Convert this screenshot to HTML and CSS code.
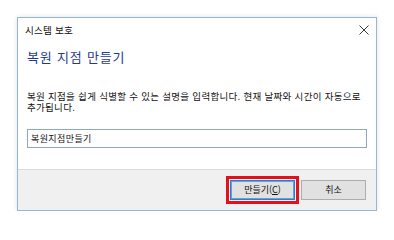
FILE: index.html
```html
<!DOCTYPE html>
<html lang="ko">
<head>
<meta charset="utf-8">
<title>시스템 보호</title>
<link rel="stylesheet" href="styles.css">
</head>
<body>
<div class="dialog">
  <div class="titlebar">
    <span class="title">시스템 보호</span>
    <span class="close" aria-label="닫기">
      <svg width="10" height="10" viewBox="0 0 10 10"><path d="M0.5 0.5L9.5 9.5M9.5 0.5L0.5 9.5" stroke="#3a3a3a" stroke-width="1" fill="none"/></svg>
    </span>
  </div>
  <div class="content">
    <h1 class="heading">복원 지점 만들기</h1>
    <p class="desc">복원 지점을 쉽게 식별할 수 있는 설명을 입력합니다. 현재 날짜와 시간이 자동으로 추가됩니다.</p>
    <div class="field">복원지점만들기</div>
  </div>
  <div class="footer">
    <span class="highlight"><button class="btn btn-default">만들기(<u>C</u>)</button></span>
    <button class="btn">취소</button>
  </div>
</div>
</body>
</html>
```
FILE: styles.css
```css
html, body {
  margin: 0;
  padding: 0;
  background: #ffffff;
}
body {
  padding: 17px 0 0 17px;
  font-family: "Noto Sans CJK KR", "Noto Sans", sans-serif;
  color: #000;
}
.dialog {
  width: 360px;
  height: 194px;
  box-sizing: border-box;
  border: 1px solid #95b7d6;
  background: #fff;
  display: flex;
  flex-direction: column;
  box-shadow: 0 0 5px rgba(0, 0, 0, 0.12);
}
.titlebar {
  height: 24px;
  display: flex;
  align-items: center;
  justify-content: space-between;
  padding: 0 7px 0 7px;
}
.title {
  font-size: 9.6px;
  line-height: 12px;
  letter-spacing: 0.2px;
  color: #111;
}
.close {
  display: flex;
  width: 10px;
  height: 10px;
}
.content {
  flex: 1;
  padding: 7px 9px 0 9px;
}
.heading {
  margin: 0;
  font-size: 13px;
  line-height: 16px;
  font-weight: normal;
  letter-spacing: 0.8px;
  color: #1f3a93;
}
.desc {
  margin: 26px 0 0 0;
  font-size: 9.5px;
  line-height: 10.5px;
  letter-spacing: 0.3px;
  word-break: keep-all;
  color: #111;
}
.field {
  margin-top: 17px;
  height: 19px;
  box-sizing: border-box;
  border: 1px solid #8ea7c4;
  padding: 0 3px;
  font-size: 9px;
  line-height: 17px;
  letter-spacing: 0.4px;
  color: #111;
}
.footer {
  height: 41px;
  box-sizing: border-box;
  border-top: 1px solid #dcdcdc;
  background: #f0f0f0;
  display: flex;
  align-items: center;
  justify-content: flex-end;
  gap: 2px;
  padding-right: 10px;
}
.highlight {
  display: flex;
  border: 3px solid #e3111b;
  padding: 1px;
}
.btn {
  width: 65px;
  height: 20px;
  box-sizing: border-box;
  margin: 0;
  padding: 0;
  border: 1px solid #adadad;
  background: #e1e1e1;
  font-family: "Noto Sans CJK KR", "Noto Sans", sans-serif;
  font-size: 9px;
  line-height: 18px;
  color: #111;
}
.btn u {
  text-decoration: underline;
  text-underline-offset: 1px;
}
.btn-default {
  border: 1px solid #2f7fc8;
  box-shadow: inset 0 0 0 1px #5fa3de;
}
```
